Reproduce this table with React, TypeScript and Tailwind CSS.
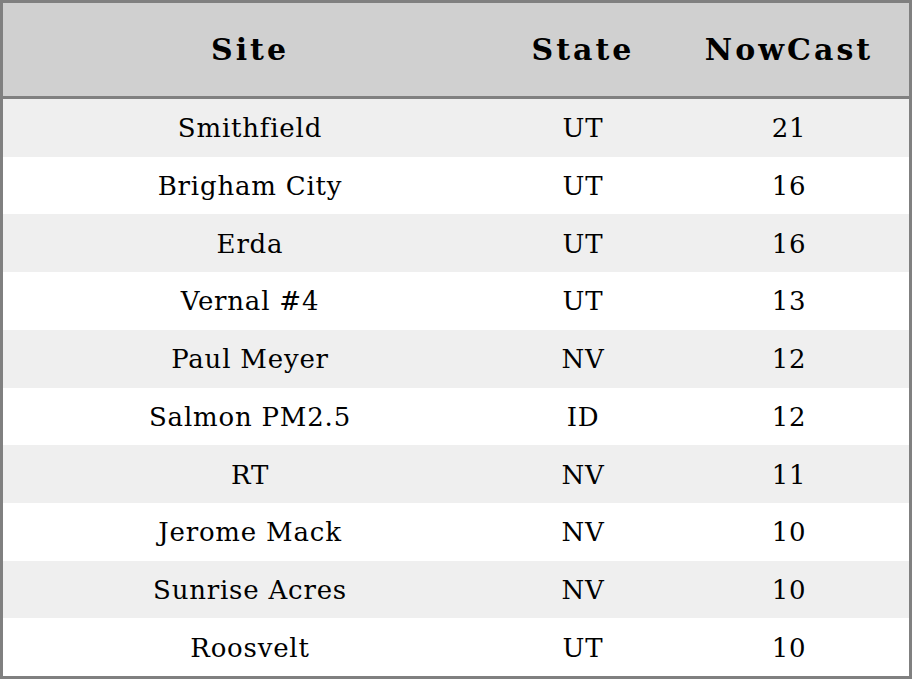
const ROWS = [
  { site: "Smithfield", state: "UT", nowcast: 21 },
  { site: "Brigham City", state: "UT", nowcast: 16 },
  { site: "Erda", state: "UT", nowcast: 16 },
  { site: "Vernal #4", state: "UT", nowcast: 13 },
  { site: "Paul Meyer", state: "NV", nowcast: 12 },
  { site: "Salmon PM2.5", state: "ID", nowcast: 12 },
  { site: "RT", state: "NV", nowcast: 11 },
  { site: "Jerome Mack", state: "NV", nowcast: 10 },
  { site: "Sunrise Acres", state: "NV", nowcast: 10 },
  { site: "Roosvelt", state: "UT", nowcast: 10 },
];

export default function App() {
  return (
    <div
      className="w-[912px] h-[679px] border-[3px] border-[#808080] bg-white flex flex-col text-black"
      style={{ fontFamily: "'DejaVu Serif', serif" }}
    >
      {/* Header */}
      <div className="h-[96px] shrink-0 bg-[#d0d0d0] border-b-[3px] border-[#808080] flex items-center text-[30px] font-bold tracking-[3px]">
        <div className="w-[494px] text-center">Site</div>
        <div className="w-[172px] text-center">State</div>
        <div className="flex-1 text-center">NowCast</div>
      </div>

      {/* Body */}
      <div className="flex-1 flex flex-col text-[26px] tracking-[0.8px]">
        {ROWS.map((row, i) => (
          <div
            key={row.site}
            className={`flex-1 flex items-center pt-[2px] ${i % 2 === 0 ? "bg-[#efefef]" : "bg-white"}`}
          >
            <div className="w-[494px] text-center">{row.site}</div>
            <div className="w-[172px] text-center">{row.state}</div>
            <div className="flex-1 text-center">{row.nowcast}</div>
          </div>
        ))}
      </div>
    </div>
  );
}
